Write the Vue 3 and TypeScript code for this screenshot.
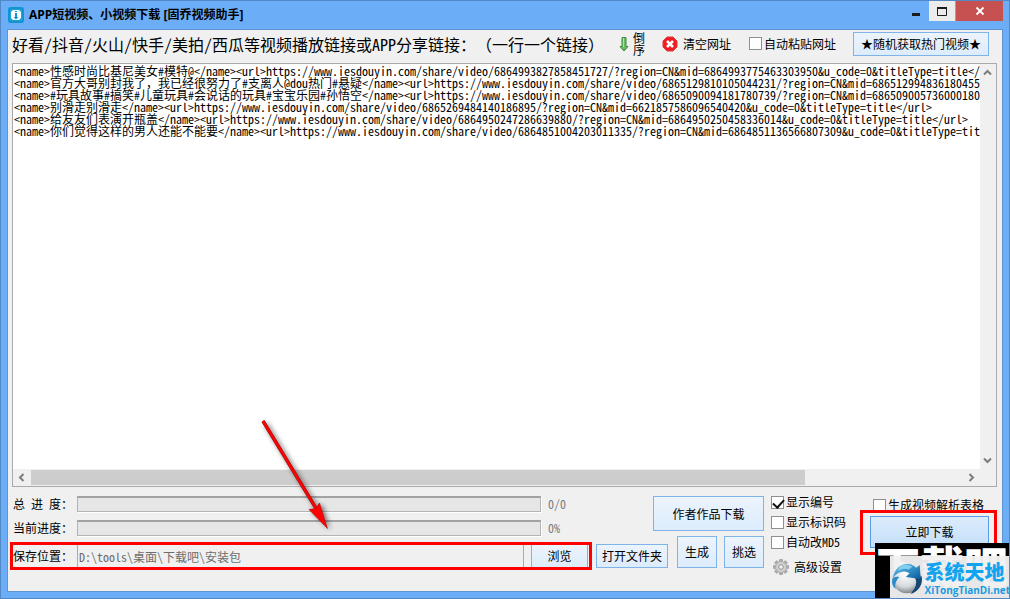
<script setup lang="ts">
import { ref } from 'vue'

interface Option {
  id: string
  label: string
  checked: boolean
}

const links = ref<string>(
  [
    '<name>性感时尚比基尼美女#模特@</name><url>https://www.iesdouyin.com/share/video/6864993827858451727/?region=CN&mid=6864993775463303950&u_code=0&titleType=title</url>',
    '<name>官方大哥别封我了，我已经很努力了#支离人@dou热门#悬疑</name><url>https://www.iesdouyin.com/share/video/6865129810105044231/?region=CN&mid=6865129948361804551&u_code=0&titleType=title</url>',
    '<name>#玩具故事#搞笑#儿童玩具#会说话的玩具#宝宝乐园#孙悟空</name><url>https://www.iesdouyin.com/share/video/6865090094181780739/?region=CN&mid=6865090057360001806&u_code=0&titleType=title</url>',
    '<name>别滑走别滑走</name><url>https://www.iesdouyin.com/share/video/6865269484140186895/?region=CN&mid=6621857586096540420&u_code=0&titleType=title</url>',
    '<name>给友友们表演开瓶盖</name><url>https://www.iesdouyin.com/share/video/6864950247286639880/?region=CN&mid=6864950250458336014&u_code=0&titleType=title</url>',
    '<name>你们觉得这样的男人还能不能要</name><url>https://www.iesdouyin.com/share/video/6864851004203011335/?region=CN&mid=6864851136566807309&u_code=0&titleType=title</url>',
  ].join('\n'),
)

const autoPaste = ref(false)
const makeTable = ref(false)
const savePath = ref('D:\\tools\\桌面\\下载吧\\安装包')
const options = ref<Option[]>([
  { id: 'opt-number', label: '显示编号', checked: true },
  { id: 'opt-code', label: '显示标识码', checked: false },
  { id: 'opt-md5', label: '自动改MD5', checked: false },
])
const total = ref(0)
const current = ref(0)
const teeth = [0, 45, 90, 135, 180, 225, 270, 315]
</script>

<template>
  <main class="window">
    <header class="titlebar">
      <svg class="app-icon" viewBox="0 0 16 16" aria-hidden="true">
        <rect x="0" y="0" width="16" height="16" rx="2" fill="#1ba3dc" />
        <rect x="1" y="1" width="14" height="14" rx="2" fill="none" stroke="#0c84c0" />
        <path d="M5 3h6l2 2v6l-2 2H5l-2-2V5z" fill="#fff" />
        <path d="M7 4h2v1H7zM7 6h2v4h1.500L8 12.500 5.500 10H7z" fill="#1593d0" />
      </svg>
      <h1>APP短视频、小视频下载 [固乔视频助手]</h1>
      <div class="win-buttons">
        <button class="win min" type="button" aria-label="最小化">
          <svg viewBox="0 0 10 10"><path d="M1 8.500h8" stroke="#1b1b1b" stroke-width="3" /></svg>
        </button>
        <button class="win max" type="button" aria-label="最大化">
          <svg viewBox="0 0 10 10"><path d="M.5 1v8.500h9V1" fill="none" stroke="#1b1b1b" /><path d="M0 2h10" stroke="#1b1b1b" stroke-width="2" /></svg>
        </button>
        <button class="win close" type="button" aria-label="关闭">
          <svg viewBox="0 0 10 10"><path d="M1.500 1.500l7 7M8.500 1.500l-7 7" stroke="#fff" stroke-width="1.800" /></svg>
        </button>
      </div>
    </header>

    <div class="client">
      <div class="toolbar">
        <label class="heading" for="links">好看/抖音/火山/快手/美拍/西瓜等视频播放链接或APP分享链接：（一行一个链接）</label>
        <button class="plain order" type="button">
          <svg viewBox="0 0 10 16" width="10" height="16" aria-hidden="true">
            <path d="M3 1.500h4v9h2L5 15 1 10.500h2z" fill="#6dbb63" stroke="#3d8b3d" />
            <path d="M4.500 2v9" stroke="#b5e2a8" />
          </svg>
          <span>倒序</span>
        </button>
        <button class="plain clear" type="button">
          <svg viewBox="0 0 16 16" width="16" height="16" aria-hidden="true">
            <path d="M5 1h6l4 4v6l-4 4H5l-4-4V5z" fill="#f01e22" stroke="#d8383a" stroke-linejoin="round" />
            <path d="M5 5l6 6M11 5l-6 6" stroke="#fff" stroke-width="2.600" />
          </svg>
          清空网址
        </button>
        <label class="check paste"><input v-model="autoPaste" type="checkbox" />自动粘贴网址</label>
        <button class="btn hot" type="button">★随机获取热门视频★</button>
      </div>

      <div class="editor">
        <textarea id="links" v-model="links" wrap="off" spellcheck="false"></textarea>
        <div class="vbar">
          <svg viewBox="0 0 9 7" width="9" height="7"><path d="M1 5.500l3.500-3.500L8 5.500" /></svg>
          <svg viewBox="0 0 9 7" width="9" height="7"><path d="M1 1.500l3.500 3.500L8 1.500" /></svg>
        </div>
        <div class="hbar">
          <svg viewBox="0 0 7 9" width="7" height="9"><path d="M5.500 1L2 4.500 5.500 8" /></svg>
          <div class="track"><div class="thumb"></div></div>
          <svg viewBox="0 0 7 9" width="7" height="9"><path d="M1.500 1L5 4.500 1.500 8" /></svg>
        </div>
      </div>

      <div class="bottom">
        <div class="main">
          <div class="upper">
            <div class="progresses">
              <div class="row">
                <label for="total">总&nbsp;进&nbsp;度：</label>
                <progress id="total" :value="total" max="100"></progress>
                <output>0/0</output>
              </div>
              <div class="row">
                <label for="current">当前进度：</label>
                <progress id="current" :value="current" max="100"></progress>
                <output>0%</output>
              </div>
            </div>
            <button class="btn author" type="button">作者作品下载</button>
          </div>
          <div class="lower">
            <div class="save">
              <label for="path">保存位置：</label>
              <input id="path" v-model="savePath" type="text" readonly />
              <button class="btn browse" type="button">浏览</button>
            </div>
            <button class="btn folder" type="button">打开文件夹</button>
            <button class="btn small" type="button">生成</button>
            <button class="btn small" type="button">挑选</button>
          </div>
        </div>

        <div class="options">
          <label v-for="o in options" :key="o.id" class="check">
            <input :id="o.id" v-model="o.checked" type="checkbox" />{{ o.label }}
          </label>
          <button class="plain settings" type="button">
            <svg viewBox="0 0 18 18" width="18" height="18" aria-hidden="true">
              <g fill="#a9a9a9">
                <rect v-for="t in teeth" :key="t" x="7" y="1" width="4" height="5" rx="1" :transform="`rotate(${t} 9 9)`" />
              </g>
              <circle cx="9" cy="9" r="5.500" fill="#cfcfcf" stroke="#b0b0b0" />
              <circle cx="9" cy="9" r="2.300" fill="#f0f0f0" stroke="#959595" />
            </svg>
            高级设置
          </button>
        </div>

        <div class="start">
          <label class="check"><input v-model="makeTable" type="checkbox" />生成视频解析表格</label>
          <div class="start-box"><button class="btn go" type="button">立即下载</button></div>
        </div>
      </div>
    </div>

    <svg class="arrow" viewBox="0 0 90 130" width="90" height="130" aria-hidden="true">
      <defs>
        <filter id="soft" x="-20%" y="-20%" width="140%" height="140%"><feGaussianBlur stdDeviation="2.500" /></filter>
      </defs>
      <g filter="url(#soft)" opacity=".65">
        <path d="M15 14L66 98" stroke="#333" stroke-width="4" />
        <path d="M60 101l7-2 4-5 8 25z" fill="#222" />
      </g>
      <path d="M12 11L66 100" stroke="#8b0a0a" stroke-width="3.400" />
      <path d="M12 11L66 100" stroke="#fb0303" stroke-width="2.600" />
      <path d="M58 99.500L64.500 98.500 68.500 93 76.500 118.500z" fill="#fb0303" stroke="#b80a0a" stroke-width=".6" />
    </svg>

    <aside class="watermark">
      <span class="big">下载吧</span>
      <div class="brand">
        <svg viewBox="0 0 36 36" width="36" height="36" aria-hidden="true">
          <defs>
            <radialGradient id="ball" cx=".45" cy=".35" r=".7">
              <stop offset="0" stop-color="#fff" />
              <stop offset=".6" stop-color="#d5dade" />
              <stop offset="1" stop-color="#69757e" />
            </radialGradient>
            <linearGradient id="sea" x1="0" y1="0" x2="1" y2="1">
              <stop offset="0" stop-color="#62c9f5" />
              <stop offset="1" stop-color="#075a9c" />
            </linearGradient>
          </defs>
          <circle cx="18" cy="19" r="15.500" fill="url(#ball)" />
          <path d="M34 16c2 9-4 17-12 19 5-5 8-11 5-17z" fill="#17466e" />
          <path d="M3 18C5 8 12 2 20 3c3 0 6 2 8 4l4-3 1 15-16-2 4-4C15 9 8 11 3 18z" fill="url(#sea)" />
          <path d="M10 7c4-4 10-4 14-1l-4 3C16 7 12 8 8 11z" fill="#9fe0fa" opacity=".7" />
          <path d="M3 18c-2 5 0 9 3 12-1-4 0-9 4-13-3-1-5 0-7 1z" fill="#2a8cc8" />
        </svg>
        <div class="brand-text">
          <strong>系统天地</strong>
          <span>XiTongTianDi.net</span>
        </div>
      </div>
    </aside>
  </main>
</template>

<style>
html,
body,
#app {
  height: 100%;
}
body {
  margin: 0;
}
</style>

<style scoped>
* {
  box-sizing: border-box;
}
.window {
  position: relative;
  display: flex;
  flex-direction: column;
  height: 100%;
  overflow: hidden;
  padding: 0 7px 7px;
  border: 1px solid #5288c4;
  background: #6badf6;
  color: #000;
  font: 12px/16px 'Noto Sans Mono CJK SC', 'Noto Sans CJK SC', monospace;
  text-spacing-trim: space-all;
}
button,
input,
textarea {
  margin: 0;
  font: inherit;
  color: inherit;
  border-radius: 0;
}
.titlebar {
  display: flex;
  align-items: center;
  flex: none;
  height: 28px;
}
.app-icon {
  width: 16px;
  height: 16px;
}
.titlebar h1 {
  flex: 1;
  margin: 0 0 0 5px;
  font: bold 12px/16px 'Open Sans', 'Noto Sans CJK SC', sans-serif;
}
.win-buttons {
  display: flex;
  align-self: flex-start;
  margin-right: -1px;
}
.win {
  display: flex;
  align-items: center;
  justify-content: center;
  width: 26px;
  height: 20px;
  padding: 0;
  border: 0;
  background: none;
}
.win svg {
  width: 10px;
  height: 10px;
}
.win.min svg {
  width: 10px;
}
.win.max {
  background: #ebebeb;
}
.win.close {
  width: 47px;
  margin-left: 1px;
  background: #c75050;
}
.client {
  display: flex;
  flex-direction: column;
  flex: 1;
  min-height: 0;
  margin: 0 -1px -1px;
  padding: 0 5px 0 4px;
  border: 1px solid #5e94d0;
  background: #f0f0f0;
}
.toolbar {
  display: flex;
  align-items: center;
  flex: none;
  height: 33px;
  padding: 0 8px 6px 0;
  white-space: nowrap;
}
.toolbar > * {
  flex: none;
}
.heading {
  font-size: 16px;
  line-height: 24px;
}
.plain {
  display: flex;
  align-items: center;
  padding: 0;
  border: 0;
  background: none;
}
.order {
  gap: 4px;
  margin-left: auto;
}
.order span {
  width: 12px;
  line-height: 12px;
  white-space: normal;
}
.clear {
  gap: 5px;
  margin-left: 17px;
}
.paste {
  margin-left: 18px;
}
.check {
  display: flex;
  align-items: center;
  gap: 2px;
  line-height: 20px;
  white-space: nowrap;
}
.check input {
  appearance: none;
  flex: none;
  width: 13px;
  height: 13px;
  border: 1px solid #8e8f8f;
  background: #fff;
}
.check input:checked::before {
  content: '';
  display: block;
  width: 5px;
  height: 9px;
  margin: 0 0 0 3px;
  border: solid #111;
  border-width: 0 2px 2px 0;
  transform: rotate(42deg);
}
.btn {
  flex: none;
  padding: 0;
  border: 1px solid #7eb4ea;
  background: linear-gradient(#ecf4fc, #dcecfc);
  text-align: center;
  white-space: nowrap;
}
.hot {
  width: 136px;
  height: 24px;
  margin-left: 17px;
}
.editor {
  display: grid;
  grid-template: minmax(0, 1fr) 17px / minmax(0, 1fr) 16px;
  flex: 1;
  min-height: 0;
  border: 1px solid #a9a9ae;
  background: #f0f0f0;
}
.editor textarea {
  width: 100%;
  height: 100%;
  padding: 1px 0 0 1px;
  border: 0;
  outline: 0;
  resize: none;
  overflow: hidden;
  background: #fff;
  line-height: 12px;
  white-space: pre;
}
.vbar {
  display: flex;
  flex-direction: column;
  align-items: center;
  justify-content: space-between;
  padding: 5px 1px 5px 0;
}
.editor svg {
  flex: none;
  fill: none;
  stroke: #7d7d7d;
  stroke-width: 2;
}
.hbar {
  display: flex;
  align-items: center;
  padding: 0 5px;
}
.track {
  flex: 1;
  height: 15px;
  margin: 0 5px 0 6px;
}
.thumb {
  width: 83%;
  height: 100%;
  background: #cdcdcd;
}
.bottom {
  display: flex;
  flex: none;
  height: 104px;
  padding: 5px 8px 0 1px;
}
.main {
  flex: 1;
  min-width: 0;
  padding-top: 4px;
}
.upper {
  display: flex;
  height: 40px;
}
.progresses {
  display: flex;
  flex-direction: column;
  flex: 1;
  gap: 8px;
}
.row {
  display: flex;
  height: 16px;
}
.row label,
.save label {
  flex: none;
  width: 64px;
  white-space: nowrap;
}
.row output {
  width: 105px;
  color: #7a7a7a;
}
progress {
  appearance: none;
  flex: 1;
  min-width: 0;
  height: 16px;
  margin-right: 7px;
  border: 1px solid #b4b4b4;
  border-top: 2px solid #a3a3a3;
  background: #e6e6e6;
  box-shadow: 1px 1px 0 #fff;
}
progress::-webkit-progress-bar {
  background: #e6e6e6;
}
progress::-webkit-progress-value {
  background: #06b025;
}
.author {
  width: 111px;
  height: 35px;
}
.lower {
  display: flex;
  align-items: flex-end;
  height: 32px;
}
.save {
  display: flex;
  align-items: center;
  flex: 1;
  height: 24px;
  margin: 0 6px 0 -1px;
  padding: 0 2px 0 1px;
  outline: 3px solid #f00;
  outline-offset: -1px;
}
.save input {
  flex: 1;
  min-width: 0;
  height: 22px;
  padding: 0 1px;
  border: solid #7eb4ea;
  border-width: 0 1px;
  outline: 0;
  background: #f0f0f0;
  color: #6d6d6d;
}
.browse {
  width: 57px;
  height: 24px;
  margin-left: 7px;
}
.folder {
  width: 72px;
  height: 24px;
}
.small {
  width: 40px;
  height: 32px;
  margin-left: 7px;
}
.folder + .small {
  margin-left: 9px;
}
.options {
  flex: none;
  width: 89px;
  margin-left: 7px;
}
.settings {
  gap: 4px;
  height: 20px;
  margin: 5px 0 0 1px;
}
.start {
  flex: none;
  padding-top: 3px;
}
.start > .check {
  padding-left: 13px;
}
.start-box {
  position: relative;
  width: 137px;
  height: 45px;
  margin: -5px -8px 0 0;
  padding: 3px 5px 0 7px;
  border: 3px solid #f00;
}
.go {
  width: 100%;
  height: 32px;
  border-color: #569de5;
  background: linear-gradient(#dcebfb, #c5e0fa);
}
.arrow {
  position: absolute;
  left: 250px;
  bottom: 58px;
}
.watermark {
  position: absolute;
  right: -1px;
  bottom: -1px;
  width: 135px;
  height: 56px;
  overflow: hidden;
  background: #000;
  color: #fff;
}
.big {
  display: block;
  padding-left: 1px;
  font: 900 44px/44px 'Noto Sans CJK SC', sans-serif;
  white-space: nowrap;
}
.brand {
  position: absolute;
  right: 0;
  bottom: 0;
  display: flex;
  align-items: center;
  gap: 1px;
  width: 120px;
  height: 43px;
  background: rgba(240, 240, 240, 0.96);
}
.brand-text {
  display: flex;
  flex-direction: column;
}
.brand strong {
  color: #12a4ee;
  font: 900 20px/24px 'Noto Sans CJK SC', sans-serif;
}
.brand span {
  color: #1a9be0;
  font: bold 10px/12px 'Open Sans', sans-serif;
}
</style>
